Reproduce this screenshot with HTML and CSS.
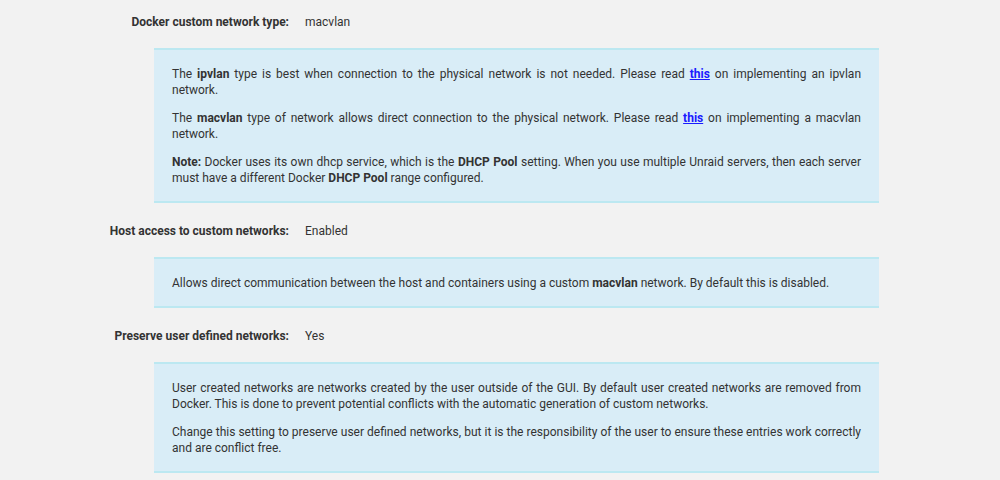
FILE: index.html
```html
<!DOCTYPE html>
<html lang="en">

<head>
    <meta charset="UTF-8">
    <title>Docker Settings</title>
    <link rel="stylesheet" href="styles.css">
</head>

<body>
    <div class="settings">
        <dl class="setting">
            <dt>Docker custom network type:</dt>
            <dd>macvlan</dd>
        </dl>
        <blockquote class="inline-help">
            <p>The <b>ipvlan</b> type is best when connection to the physical network is not needed. Please read <a href="#">this</a> on implementing an ipvlan network.</p>
            <p>The <b>macvlan</b> type of network allows direct connection to the physical network. Please read <a href="#">this</a> on implementing a macvlan network.</p>
            <p><b>Note:</b> Docker uses its own dhcp service, which is the <b>DHCP Pool</b> setting. When you use multiple Unraid servers, then each server must have a different Docker <b>DHCP Pool</b> range configured.</p>
        </blockquote>

        <dl class="setting">
            <dt>Host access to custom networks:</dt>
            <dd>Enabled</dd>
        </dl>
        <blockquote class="inline-help">
            <p>Allows direct communication between the host and containers using a custom <b>macvlan</b> network. By default this is disabled.</p>
        </blockquote>

        <dl class="setting">
            <dt>Preserve user defined networks:</dt>
            <dd>Yes</dd>
        </dl>
        <blockquote class="inline-help">
            <p>User created networks are networks created by the user outside of the GUI. By default user created networks are removed from Docker. This is done to prevent potential conflicts with the automatic generation of custom networks.</p>
            <p>Change this setting to preserve user defined networks, but it is the responsibility of the user to ensure these entries work correctly and are conflict free.</p>
        </blockquote>
    </div>
</body>

</html>
```

FILE: styles.css
```css
body {
    margin: 0;
    background-color: #f2f2f2;
    color: #333;
    font-family: Roboto, "Noto Sans", sans-serif;
    font-size: 12px;
}

.settings {
    width: 1000px;
}

.setting {
    display: grid;
    grid-template-columns: 289px 1fr;
    column-gap: 16px;
    align-items: center;
    height: 44px;
    margin: 6px 0 0;
}

.setting:first-child {
    margin-top: 0;
}

.setting dt {
    text-align: right;
    font-weight: bold;
}

.setting dd {
    margin: 0;
}

.inline-help {
    width: 689px;
    margin: 4px 0 0 154px;
    padding: 16px 18px 15px;
    background-color: #d9edf7;
    border-top: 2px solid #bce8f1;
    border-bottom: 2px solid #bce8f1;
    line-height: 16px;
    text-align: justify;
}

.inline-help p {
    margin: 0 0 12px;
}

.inline-help p:last-child {
    margin-bottom: 0;
}

.inline-help a {
    color: #1a1aff;
    font-weight: bold;
}
```
